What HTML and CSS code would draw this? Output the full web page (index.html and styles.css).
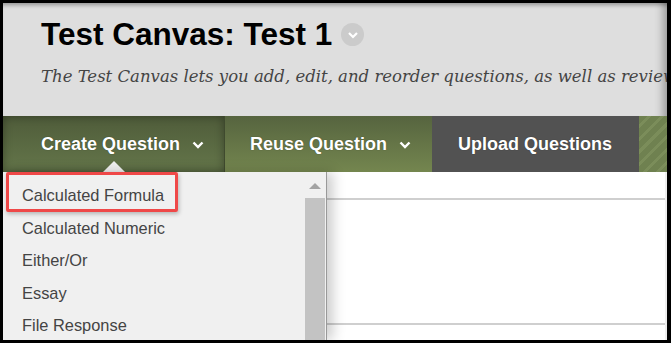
FILE: index.html
```html
<!DOCTYPE html>
<html lang="en">
<head>
    <meta charset="UTF-8">
    <title>Test Canvas: Test 1</title>
    <link rel="stylesheet" href="styles.css">
</head>
<body>
    <div class="frame">
        <div class="page-header">
            <h1 class="page-title">
                Test Canvas: Test 1
                <span class="title-menu">
                    <svg width="12" height="8" viewBox="0 0 12 8"><path d="M2 2 L6 6 L10 2" fill="none" stroke="#fff" stroke-width="2.2"/></svg>
                </span>
            </h1>
            <p class="page-desc">The Test Canvas lets you add, edit, and reorder questions, as well as review</p>
        </div>

        <div class="action-bar">
            <div class="action active">
                Create Question
                <svg class="chev" width="12" height="8" viewBox="0 0 12 8"><path d="M1.5 1.5 L6 6 L10.5 1.5" fill="none" stroke="#fff" stroke-width="2.4"/></svg>
                <span class="caret"></span>
            </div>
            <div class="action">
                Reuse Question
                <svg class="chev" width="12" height="8" viewBox="0 0 12 8"><path d="M1.5 1.5 L6 6 L10.5 1.5" fill="none" stroke="#fff" stroke-width="2.4"/></svg>
            </div>
            <div class="action upload">Upload Questions</div>
            <div class="stripes"></div>
        </div>

        <div class="main">
            <div class="dropdown">
                <ul class="menu">
                    <li>Calculated Formula</li>
                    <li>Calculated Numeric</li>
                    <li>Either/Or</li>
                    <li>Essay</li>
                    <li>File Response</li>
                </ul>
                <div class="scrollbar">
                    <div class="arrow"></div>
                    <div class="thumb"></div>
                </div>
                <div class="highlight"></div>
            </div>
            <div class="content">
                <div class="row top"></div>
                <div class="row mid"></div>
                <div class="row"></div>
            </div>
        </div>
    </div>
</body>
</html>
```

FILE: styles.css
```css
html, body {
    margin: 0;
    padding: 0;
}
body {
    background: #000;
    padding: 3px 4px 3px 3px;
    width: 671px;
    height: 343px;
    box-sizing: border-box;
    font-family: "Liberation Sans", Arial, sans-serif;
}
.frame {
    width: 664px;
    height: 337px;
    display: flex;
    flex-direction: column;
    overflow: hidden;
    background: #fff;
}
.page-header {
    height: 113px;
    flex: none;
    box-sizing: border-box;
    padding: 13px 0 0 38px;
    background: #dedede;
    box-shadow: inset 0 5px 4px -3px rgba(0, 0, 0, 0.35), inset -12px 0 8px -8px rgba(0, 0, 0, 0.3);
    overflow: hidden;
}
.page-title {
    margin: 0;
    font-size: 31.5px;
    line-height: 36px;
    font-weight: bold;
    color: #000;
    display: flex;
    align-items: center;
    gap: 9px;
}
.title-menu {
    width: 23px;
    height: 23px;
    border-radius: 50%;
    background: #cbcbcb;
    display: flex;
    align-items: center;
    justify-content: center;
    margin-top: 1px;
}
.page-desc {
    margin: 15px 0 0;
    font-family: "DejaVu Serif", Georgia, serif;
    font-style: italic;
    font-size: 16.5px;
    line-height: 20px;
    color: #444;
    white-space: nowrap;
}
.action-bar {
    height: 56px;
    flex: none;
    display: flex;
    background: linear-gradient(#56643f, #74864f);
}
.action {
    position: relative;
    display: flex;
    align-items: center;
    gap: 12px;
    padding-left: 25px;
    width: 207px;
    box-sizing: border-box;
    color: #fff;
    font-weight: bold;
    font-size: 18px;
    text-shadow: 0 0 1px rgba(0, 0, 0, 0.5);
}
.action.active {
    width: 222px;
    padding-left: 38px;
    background: linear-gradient(#4f5c3a, #64764a);
    box-shadow: inset 0 0 10px rgba(0, 0, 0, 0.35);
    border-right: 1px solid #3f4a2e;
}
.action.upload {
    background: #525252;
    padding-left: 26px;
}
.chev {
    margin-top: 2px;
}
.caret {
    position: absolute;
    left: 100px;
    bottom: 0;
    width: 0;
    height: 0;
    border-left: 11px solid transparent;
    border-right: 11px solid transparent;
    border-bottom: 11px solid #f0f0f0;
}
.stripes {
    flex: 1;
    background: repeating-linear-gradient(135deg, #6f8150 0 6px, #7b8d5a 6px 9px);
}
.main {
    flex: 1;
    display: flex;
    min-height: 0;
}
.dropdown {
    position: relative;
    width: 324px;
    flex: none;
    display: flex;
    background: #f0f0f0;
    border-right: 1px solid #999;
    box-sizing: border-box;
    box-shadow: 6px 0 12px rgba(0, 0, 0, 0.2);
    z-index: 1;
}
.menu {
    flex: 1;
    list-style: none;
    margin: 0;
    padding: 7px 0 0 19px;
}
.menu li {
    font-size: 16.4px;
    line-height: 32.5px;
    color: #444;
}
.scrollbar {
    width: 20px;
    margin-right: 1px;
    display: flex;
    flex-direction: column;
    align-items: center;
}
.arrow {
    margin-top: 11px;
    width: 0;
    height: 0;
    border-left: 6px solid transparent;
    border-right: 6px solid transparent;
    border-bottom: 6px solid #a3a3a3;
}
.thumb {
    margin-top: 9px;
    flex: 1;
    align-self: stretch;
    background: #c3c3c3;
}
.highlight {
    position: absolute;
    left: 3px;
    top: 0;
    width: 172px;
    height: 40px;
    border: 3px solid #ef4848;
    border-radius: 2px;
    box-sizing: border-box;
    box-shadow: 1px 2px 4px rgba(0, 0, 0, 0.25);
}
.content {
    flex: 1;
    display: flex;
    flex-direction: column;
    border-right: 2px solid #eee;
}
.row {
    flex: none;
}
.row.top {
    height: 26px;
    border-bottom: 2px solid #cfcfcf;
}
.row.mid {
    height: 123px;
    border-bottom: 2px solid #cfcfcf;
}
```
